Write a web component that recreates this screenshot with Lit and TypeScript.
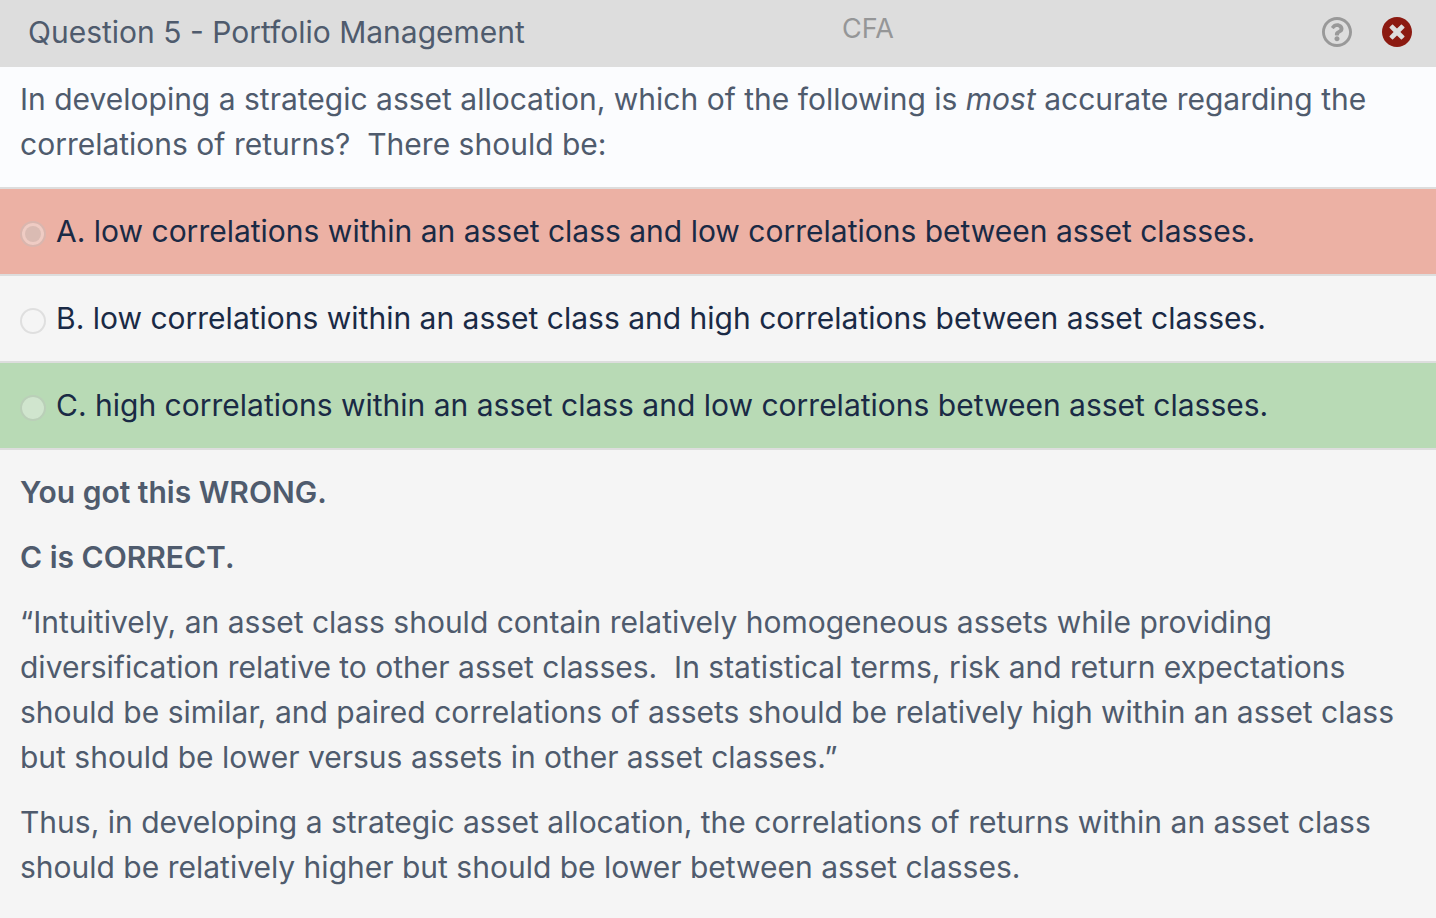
import { LitElement, html, css } from "lit";
import { customElement, state } from "lit/decorators.js";

interface Choice {
  key: string;
  text: string;
  status: string;
}

@customElement("app-root")
export class AppRoot extends LitElement {
  static styles = css`
    :host {
      display: block;
      min-height: 100vh;
      background: #f5f5f5;
      color: #4f5b6d;
      font: 30px/45px Inter, "Liberation Sans", sans-serif;
    }
    * {
      box-sizing: border-box;
    }
    .bar {
      display: grid;
      grid-template-columns: minmax(0, 11fr) auto minmax(0, 7fr);
      background: #dddddd;
      padding: 10px 24px 12px 28px;
    }
    .title {
      margin: 0;
      font: inherit;
      white-space: nowrap;
    }
    .exam {
      color: #959697;
      font-size: 27px;
      line-height: 37px;
    }
    .actions {
      display: flex;
      justify-content: flex-end;
      align-items: center;
      gap: 30px;
      padding-bottom: 1px;
    }
    .icon {
      width: 30px;
      height: 30px;
      padding: 0;
      border: 0;
      background: none;
      color: #999999;
      cursor: pointer;
    }
    .close {
      color: #8c1a11;
    }
    .glyph {
      display: block;
      width: 100%;
      height: 100%;
      fill: currentColor;
    }
    .prompt {
      margin: 0;
      padding: 10px 20px 20px;
      background: #fbfcfe;
      white-space: pre-wrap;
    }
    .choices {
      margin: 0;
      padding: 0;
      border: 0;
      border-bottom: 2px solid #dddddd;
    }
    .choice {
      display: flex;
      align-items: center;
      gap: 10px;
      padding: 20px;
      border-top: 2px solid #dddddd;
      color: #1a2a45;
    }
    .wrong {
      background: #ecb1a4;
    }
    .right {
      background: #b8dab5;
    }
    .radio {
      appearance: none;
      flex: none;
      display: grid;
      place-items: center;
      width: 26px;
      height: 26px;
      margin: 4px 0 0;
      border: 2px solid rgba(190, 190, 190, 0.4);
      border-radius: 50%;
      background: rgba(245, 245, 245, 0.4);
      background-clip: padding-box;
    }
    .radio:checked::before {
      content: "";
      width: 16px;
      height: 16px;
      border-radius: 50%;
      background: #dabbb3;
    }
    .feedback {
      padding: 20px 20px 0;
    }
    .para {
      margin: 0 0 20px;
      white-space: pre-wrap;
    }
    .verdict {
      font-weight: 600;
    }
  `;

  @state() private choices: Choice[] = [
    { key: "A", text: "low correlations within an asset class and low correlations between asset classes.", status: "wrong" },
    { key: "B", text: "low correlations within an asset class and high correlations between asset classes.", status: "" },
    { key: "C", text: "high correlations within an asset class and low correlations between asset classes.", status: "right" },
  ];

  render() {
    return html`
      <header class="bar">
        <h1 class="title">Question 5 - Portfolio Management</h1>
        <span class="exam">CFA</span>
        <div class="actions">
          <button class="icon" type="button" aria-label="Help">
            <svg class="glyph" viewBox="8 8 496 496" aria-hidden="true">
              <path d="M256 8C119.043 8 8 119.083 8 256c0 136.997 111.043 248 248 248s248-111.003 248-248C504 119.083 392.957 8 256 8zm0 448c-110.532 0-200-89.431-200-200 0-110.495 89.472-200 200-200 110.491 0 200 89.471 200 200 0 110.53-89.431 200-200 200zm107.244-255.2c0 67.052-72.421 68.084-72.421 92.863V300c0 6.627-5.373 12-12 12h-45.647c-6.627 0-12-5.373-12-12v-8.659c0-35.745 27.1-50.034 47.579-61.516 17.561-9.845 28.324-16.541 28.324-29.579 0-17.246-21.999-28.693-39.784-28.693-23.189 0-33.894 10.977-48.942 29.969-4.057 5.12-11.46 6.071-16.666 2.124l-27.824-21.098c-5.107-3.872-6.251-11.066-2.644-16.363C184.846 131.491 214.94 112 261.794 112c49.071 0 101.45 38.304 101.45 88.8zM298 368c0 23.159-18.841 42-42 42s-42-18.841-42-42 18.841-42 42-42 42 18.841 42 42z" />
            </svg>
          </button>
          <button class="icon close" type="button" aria-label="Close">
            <svg class="glyph" viewBox="8 8 496 496" aria-hidden="true">
              <path d="M256 8C119 8 8 119 8 256s111 248 248 248 248-111 248-248S393 8 256 8zm121.6 313.1c4.7 4.7 4.7 12.3 0 17L338 377.6c-4.7 4.7-12.3 4.7-17 0L256 312l-65.1 65.6c-4.7 4.7-12.3 4.7-17 0L134.4 338c-4.7-4.7-4.7-12.3 0-17l65.6-65-65.6-65.1c-4.7-4.7-4.7-12.3 0-17l39.6-39.6c4.7-4.7 12.3-4.7 17 0l65 65.7 65.1-65.6c4.7-4.7 12.3-4.7 17 0l39.6 39.6c4.7 4.7 4.7 12.3 0 17L312 256l65.6 65.1z" />
            </svg>
          </button>
        </div>
      </header>
      <p class="prompt">In developing a strategic asset allocation, which of the following is <em>most</em> accurate regarding the correlations of returns?  There should be:</p>
      <fieldset class="choices" aria-label="Answers">
        ${this.choices.map(
          (c) => html`<label class="choice ${c.status}"><input class="radio" type="radio" name="answer" .checked=${c.status === "wrong"} disabled /><span>${c.key}. ${c.text}</span></label>`
        )}
      </fieldset>
      <section class="feedback">
        <p class="para"><strong class="verdict">You got this WRONG.</strong></p>
        <p class="para"><strong class="verdict">C is CORRECT.</strong></p>
        <p class="para">“Intuitively, an asset class should contain relatively homogeneous assets while providing diversification relative to other asset classes.  In statistical terms, risk and return expectations should be similar, and paired correlations of assets should be relatively high within an asset class but should be lower versus assets in other asset classes.”</p>
        <p class="para">Thus, in developing a strategic asset allocation, the correlations of returns within an asset class should be relatively higher but should be lower between asset classes.</p>
      </section>
    `;
  }
}
